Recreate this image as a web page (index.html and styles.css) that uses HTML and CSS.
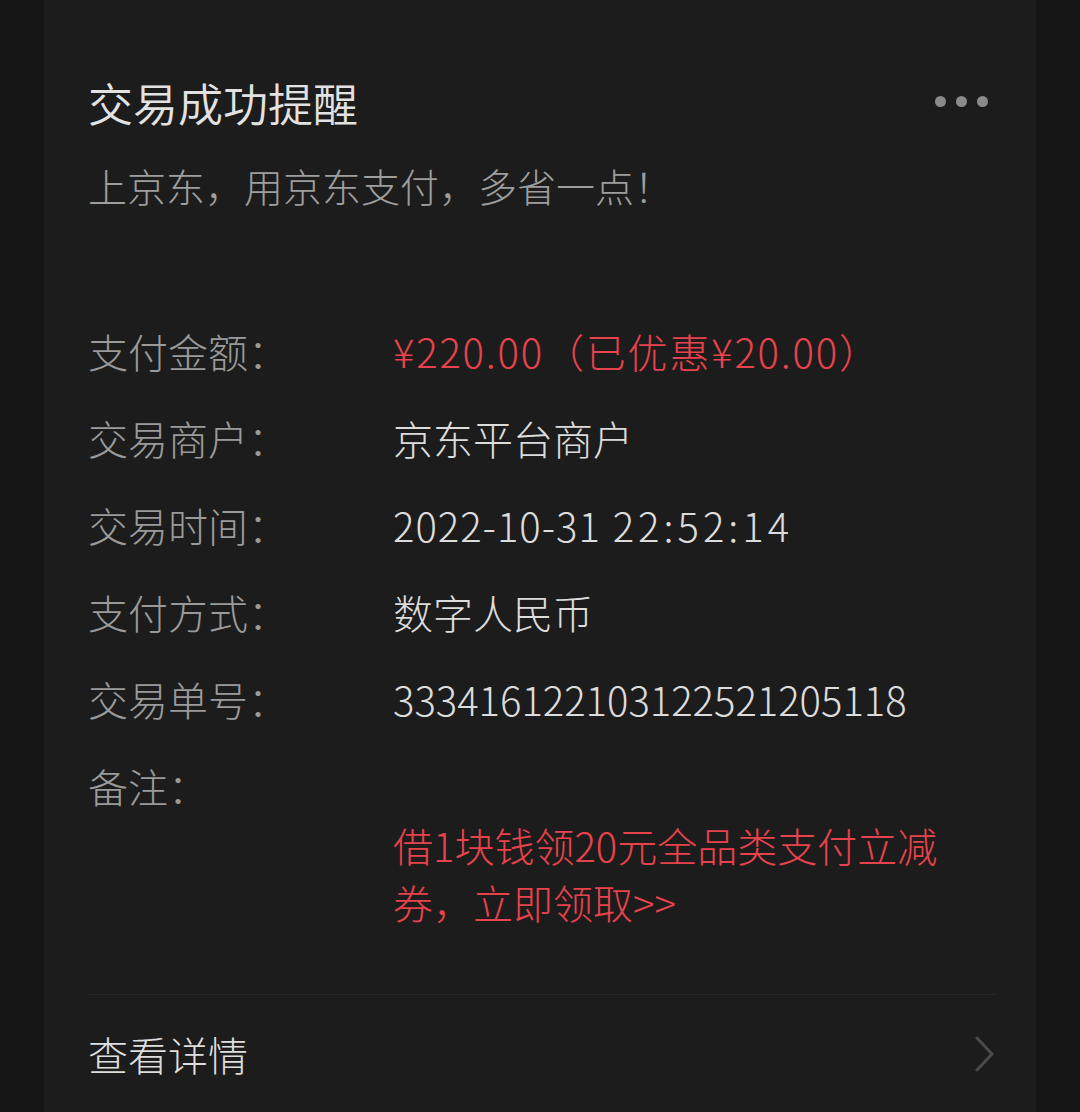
FILE: index.html
```html
<!DOCTYPE html>
<html lang="zh-CN">
<head>
<meta charset="utf-8">
<title>交易成功提醒</title>
<link rel="stylesheet" href="styles.css">
</head>
<body>
<div class="card">
  <div class="header">
    <div class="title">交易成功提醒</div>
    <div class="dots"><span></span><span></span><span></span></div>
  </div>
  <div class="subtitle">上京东，用京东支付，多省一点！</div>
  <div class="rows">
    <div class="row"><div class="label">支付金额：</div><div class="value red amount">¥220.00（已优惠¥20.00）</div></div>
    <div class="row"><div class="label">交易商户：</div><div class="value">京东平台商户</div></div>
    <div class="row"><div class="label">交易时间：</div><div class="value date">2022-10-31 <span class="time">22:52:14</span></div></div>
    <div class="row"><div class="label">支付方式：</div><div class="value">数字人民币</div></div>
    <div class="row"><div class="label">交易单号：</div><div class="value">333416122103122521205118</div></div>
    <div class="row"><div class="label">备注：</div><div class="remark red">借1块钱领20元全品类支付立减券，立即领取&gt;&gt;</div></div>
  </div>
  <div class="divider"></div>
  <div class="footer">
    <div class="link">查看详情</div>
    <svg class="chevron" width="22" height="36" viewBox="0 0 22 36"><polyline points="3,2 18,18 3,34" fill="none" stroke="#4a4a4a" stroke-width="3" stroke-linecap="round" stroke-linejoin="round"/></svg>
  </div>
</div>
</body>
</html>
```

FILE: styles.css
```css
html, body {
  margin: 0;
  padding: 0;
  background: #161616;
}
body {
  font-family: "Noto Sans CJK SC", "Noto Sans", sans-serif;
  font-weight: 300;
  width: 1080px;
  height: 1112px;
  overflow: hidden;
}
.card {
  margin: 0 44px;
  height: 1112px;
  background: #1c1c1c;
  padding: 72px 40px 0 44px;
  box-sizing: border-box;
}
.header {
  display: flex;
  justify-content: space-between;
  align-items: center;
  height: 62px;
}
.title {
  font-size: 45px;
  line-height: 62px;
  color: #e2e2e2;
  font-weight: 350;
}
.dots {
  display: flex;
  gap: 10px;
  margin-right: 8px;
  margin-top: -4px;
}
.dots span {
  width: 11px;
  height: 11px;
  border-radius: 50%;
  background: #8a8a8a;
}
.subtitle {
  margin-top: 23px;
  font-size: 39px;
  line-height: 56px;
  color: #9e9e9e;
}
.rows {
  margin-top: 95px;
}
.row {
  display: grid;
  grid-template-columns: 305px 572px;
  align-items: start;
  font-size: 40px;
  line-height: 87px;
}
.label {
  color: #9a9a9a;
}
.value {
  color: #dcdcdc;
}
.amount {
  letter-spacing: 1.8px;
}
.date {
  letter-spacing: 1px;
  word-spacing: 2px;
}
.time {
  letter-spacing: 4px;
}
.red {
  color: #e8434c;
}
.remark {
  padding-top: 74px;
  line-height: 57px;
}
.divider {
  margin-top: 63px;
  height: 1px;
  background: #262626;
}
.footer {
  margin-top: 29px;
  display: flex;
  justify-content: space-between;
  align-items: center;
  height: 60px;
}
.link {
  font-size: 40px;
  line-height: 60px;
  color: #dedede;
}
```
